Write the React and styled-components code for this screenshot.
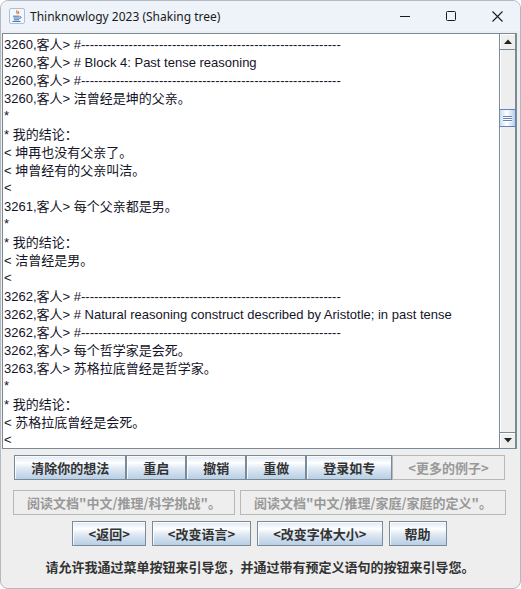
import React from "react";
import styled, { createGlobalStyle } from "styled-components";

const Global = createGlobalStyle`
  html, body { margin: 0; padding: 0; background: #ffffff; overflow: hidden; }
  * { box-sizing: border-box; }
`;

const Window = styled.div`
  width: 521px;
  height: 589px;
  border: 1px solid #b4b9c1;
  border-radius: 8px;
  overflow: hidden;
  background: #eeeeee;
  display: flex;
  flex-direction: column;
`;

const TitleBar = styled.div`
  height: 30px;
  flex: none;
  background: #eef3f9;
  display: flex;
  align-items: center;
  padding-left: 8px;
`;

const TitleText = styled.span`
  font-family: "Noto Sans", "Liberation Sans", sans-serif;
  font-size: 12px;
  color: #1a1a1a;
  margin-left: 5px;
  flex: 1;
  white-space: nowrap;
`;

const WinButton = styled.div`
  width: 46px;
  height: 30px;
  display: flex;
  align-items: center;
  justify-content: center;
`;

const Body = styled.div`
  flex: 1;
  display: flex;
  flex-direction: column;
  padding: 2px 2px 0 1px;
`;

const TextFrame = styled.div`
  height: 416px;
  flex: none;
  border: 1px solid #7a8a99;
  display: flex;
  background: #ffffff;
  margin-right: 1px;
`;

const TextContent = styled.div`
  flex: 1;
  overflow: hidden;
  padding: 1px 0 0 1px;
  font-family: "Liberation Sans", Arial, "Noto Sans CJK SC", sans-serif;
  font-size: 13px;
  color: #141428;
`;

const Line = styled.div`
  height: 18px;
  line-height: 18px;
  white-space: pre;
`;

const Cjk = styled.span`
  font-family: "Noto Sans CJK SC", sans-serif;
  font-size: 13px;
`;

const ScrollBar = styled.div`
  width: 17px;
  flex: none;
  border-left: 1px solid #7a8a99;
  background: #eeeeee;
  display: flex;
  flex-direction: column;
  position: relative;
`;

const ArrowButton = styled.div`
  height: 16px;
  flex: none;
  background: #eeeeee;
  border: 1px solid #7a8a99;
  border-left: none;
  ${(p) => (p.$down ? "border-bottom: none;" : "border-top: none;")}
  display: flex;
  align-items: center;
  justify-content: center;
  box-shadow: inset 1px 1px 0 #ffffff;
`;

const Track = styled.div`
  flex: 1;
  border-right: 1px solid #7a8a99;
  box-shadow: inset 1px 0 0 #ffffff;
`;

const Thumb = styled.div`
  position: absolute;
  left: 0;
  right: 0;
  top: 75px;
  height: 18px;
  border: 1px solid #6382bf;
  border-left: none;
  background: linear-gradient(to right, #c8ddf2 0%, #ffffff 45%, #b8cfe5 100%);
  display: flex;
  flex-direction: column;
  align-items: center;
  justify-content: center;
  gap: 1px;
`;

const Grip = styled.div`
  width: 9px;
  height: 1px;
  background: #6382bf;
  box-shadow: 0 1px 0 #ffffff;
`;

const ButtonRow = styled.div`
  display: flex;
  justify-content: center;
  gap: ${(p) => p.$gap || 0}px;
  margin-top: ${(p) => p.$top}px;
  padding-right: 1px;
`;

const Btn = styled.div`
  height: 25px;
  padding: 0 ${(p) => (p.$pad != null ? p.$pad : 16)}px;
  display: flex;
  align-items: center;
  justify-content: center;
  font-family: "Noto Sans CJK SC", sans-serif;
  font-weight: 700;
  font-size: 13px;
  white-space: nowrap;
  color: ${(p) => (p.$disabled ? "#999999" : "#333333")};
  border: 1px solid ${(p) => (p.$disabled ? "#b8b8b8" : "#7a8a99")};
  background: ${(p) =>
    p.$disabled
      ? "#eeeeee"
      : "linear-gradient(to bottom, #dde8f3 0%, #ffffff 30%, #dde8f3 55%, #b8cfe5 100%)"};
  box-shadow: ${(p) => (p.$disabled ? "none" : "inset 1px 1px 0 rgba(255,255,255,0.8)")};
  & + & {
    margin-left: ${(p) => (p.$joined ? "-1px" : "0")};
  }
`;

const Footer = styled.div`
  flex: 1;
  display: flex;
  align-items: center;
  justify-content: center;
  font-family: "Noto Sans CJK SC", sans-serif;
  font-weight: 700;
  font-size: 13px;
  color: #333333;
  padding-bottom: 2px;
`;

const dashes = "-".repeat(60);

const lines = [
  "3260,客人> #" + dashes,
  "3260,客人> # Block 4: Past tense reasoning",
  "3260,客人> #" + dashes,
  "3260,客人> 洁曾经是坤的父亲。",
  "*",
  "* 我的结论：",
  "< 坤再也没有父亲了。",
  "< 坤曾经有的父亲叫洁。",
  "<",
  "3261,客人> 每个父亲都是男。",
  "*",
  "* 我的结论：",
  "< 洁曾经是男。",
  "<",
  "3262,客人> #" + dashes,
  "3262,客人> # Natural reasoning construct described by Aristotle; in past tense",
  "3262,客人> #" + dashes,
  "3262,客人> 每个哲学家是会死。",
  "3263,客人> 苏格拉底曾经是哲学家。",
  "*",
  "* 我的结论：",
  "< 苏格拉底曾经是会死。",
  "<",
];

function renderMixed(text) {
  const parts = text.split(/([\u3000-\u303f\u4e00-\u9fff\uff00-\uffef]+)/);
  return parts.map((p, i) =>
    i % 2 === 1 ? <Cjk key={i}>{p}</Cjk> : <React.Fragment key={i}>{p}</React.Fragment>
  );
}

const JavaIcon = () => (
  <svg width="16" height="16" viewBox="0 0 16 16">
    <rect x="0.5" y="0.5" width="15" height="15" rx="1.5" fill="#f4f8fc" stroke="#a9c0d8" />
    <path d="M8 2.5c-1.5 1.2 1.2 2 0 3.6M9.8 3.2c-1 0.8 0.6 1.4-0.3 2.4" stroke="#e8741c" strokeWidth="1.2" fill="none" />
    <path d="M4 8.2h6.5M4.5 10h6M5 11.8h5M3.5 13.4h8" stroke="#3d6fb0" strokeWidth="1" fill="none" />
    <path d="M10.8 8.5c1.8 0 1.8 2-0.4 2" stroke="#3d6fb0" strokeWidth="1" fill="none" />
  </svg>
);

export default function App() {
  return (
    <>
      <Global />
      <Window>
        <TitleBar>
          <JavaIcon />
          <TitleText>Thinknowlogy 2023 (Shaking tree)</TitleText>
          <WinButton>
            <svg width="10" height="10" viewBox="0 0 10 10">
              <path d="M0 5.5h10" stroke="#1b1b1b" strokeWidth="1" />
            </svg>
          </WinButton>
          <WinButton>
            <svg width="10" height="10" viewBox="0 0 10 10">
              <rect x="0.5" y="0.5" width="9" height="9" rx="1" fill="none" stroke="#1b1b1b" strokeWidth="1" />
            </svg>
          </WinButton>
          <WinButton>
            <svg width="11" height="11" viewBox="0 0 11 11">
              <path d="M0.5 0.5l10 10M10.5 0.5l-10 10" stroke="#1b1b1b" strokeWidth="1.1" />
            </svg>
          </WinButton>
        </TitleBar>
        <Body>
          <TextFrame>
            <TextContent>
              {lines.map((l, i) => (
                <Line key={i}>{renderMixed(l)}</Line>
              ))}
            </TextContent>
            <ScrollBar>
              <ArrowButton>
                <svg width="8" height="5" viewBox="0 0 8 5">
                  <path d="M0 5L4 0.5L8 5Z" fill="#222" />
                </svg>
              </ArrowButton>
              <Track />
              <ArrowButton $down>
                <svg width="8" height="5" viewBox="0 0 8 5">
                  <path d="M0 0L4 4.5L8 0Z" fill="#222" />
                </svg>
              </ArrowButton>
              <Thumb>
                <Grip />
                <Grip />
                <Grip />
              </Thumb>
            </ScrollBar>
          </TextFrame>
          <ButtonRow $top={6}>
            <Btn $joined $pad={16}>清除你的想法</Btn>
            <Btn $joined $pad={16}>重启</Btn>
            <Btn $joined $pad={16}>撤销</Btn>
            <Btn $joined $pad={16}>重做</Btn>
            <Btn $joined $pad={16}>登录如专</Btn>
            <Btn $joined $disabled $pad={15}>&lt;更多的例子&gt;</Btn>
          </ButtonRow>
          <ButtonRow $top={10} $gap={5}>
            <Btn $disabled $pad={13}>阅读文档"中文/推理/科学挑战"。</Btn>
            <Btn $disabled $pad={13}>阅读文档"中文/推理/家庭/家庭的定义"。</Btn>
          </ButtonRow>
          <ButtonRow $top={6} $gap={6}>
            <Btn $pad={15}>&lt;返回&gt;</Btn>
            <Btn $pad={15}>&lt;改变语言&gt;</Btn>
            <Btn $pad={15}>&lt;改变字体大小&gt;</Btn>
            <Btn $pad={15}>帮助</Btn>
          </ButtonRow>
          <Footer>请允许我通过菜单按钮来引导您，并通过带有预定义语句的按钮来引导您。</Footer>
        </Body>
      </Window>
    </>
  );
}
